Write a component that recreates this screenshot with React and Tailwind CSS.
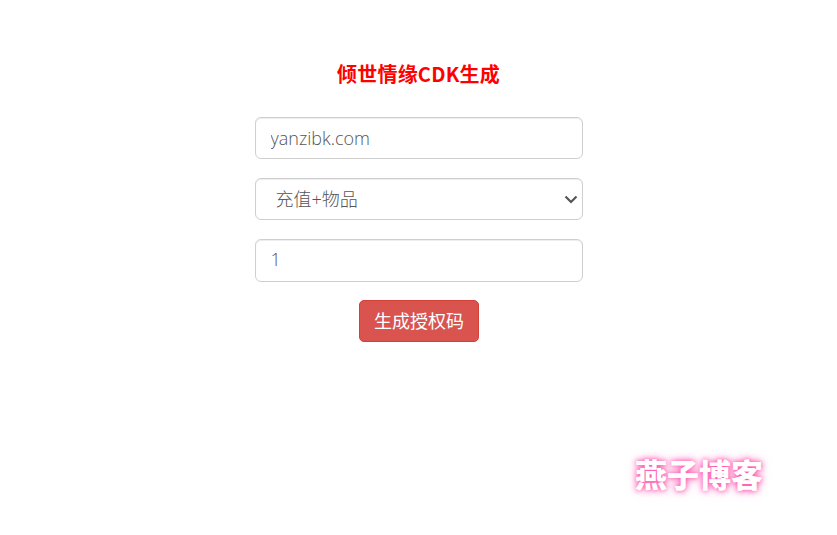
const App = () => {
  return (
    <div className="relative h-[535px] w-full overflow-hidden bg-white font-['Open_Sans','Noto_Sans_CJK_SC',sans-serif]">
      <div className="mx-auto flex w-[328px] flex-col items-center pt-[60px]">
        <h3 className="h-[28px] text-[20px] leading-[27px] font-bold tracking-[0.2px] text-[#ff0000] font-['Noto_Sans_CJK_SC',sans-serif]">
          倾世情缘CDK生成
        </h3>
        <form className="mt-[29px] flex w-full flex-col">
          <input
            type="text"
            defaultValue="yanzibk.com"
            className="h-[42px] w-full rounded-[6px] border border-[#cfcfcf] px-[15px] text-[18px] font-light text-[#555] shadow-[inset_0_1px_1px_rgba(0,0,0,0.075)] outline-none"
          />
          <div className="relative mt-[19px]">
            <select
              defaultValue="1"
              className="h-[42px] w-full appearance-none rounded-[6px] border border-[#cfcfcf] bg-white pt-[1px] pr-[30px] pl-[20px] text-[18px] font-light text-[#555] shadow-[inset_0_1px_1px_rgba(0,0,0,0.075)] outline-none"
            >
              <option value="1">充值+物品</option>
            </select>
            <svg
              viewBox="0 0 14 9"
              className="pointer-events-none absolute top-[17px] right-[5px] h-[9px] w-[14px]"
              fill="none"
              stroke="#555"
              strokeWidth="2.2"
            >
              <path d="M1.5 1.5 7 7l5.5-5.5" />
            </svg>
          </div>
          <input
            type="text"
            defaultValue="1"
            className="mt-[19px] h-[43px] w-full rounded-[6px] border border-[#cfcfcf] pr-[15px] pb-[3px] pl-[15px] text-[18px] font-light text-[#555] shadow-[inset_0_1px_1px_rgba(0,0,0,0.075)] outline-none"
          />
          <button
            type="button"
            className="mx-auto mt-[18px] h-[42px] w-[120px] rounded-[5px] border border-[#d43f3a] bg-[#d9534f] pl-[1px] text-[18px] font-normal text-white"
          >
            生成授权码
          </button>
        </form>
      </div>
      <div className="absolute top-[452px] left-[635px] text-[32px] leading-[42px] font-black text-white [text-shadow:0_0_5px_#ff4fa8,0_0_10px_#ff6fc0] font-['Noto_Sans_CJK_SC',sans-serif]">
        燕子博客
      </div>
    </div>
  );
};

export default App;
